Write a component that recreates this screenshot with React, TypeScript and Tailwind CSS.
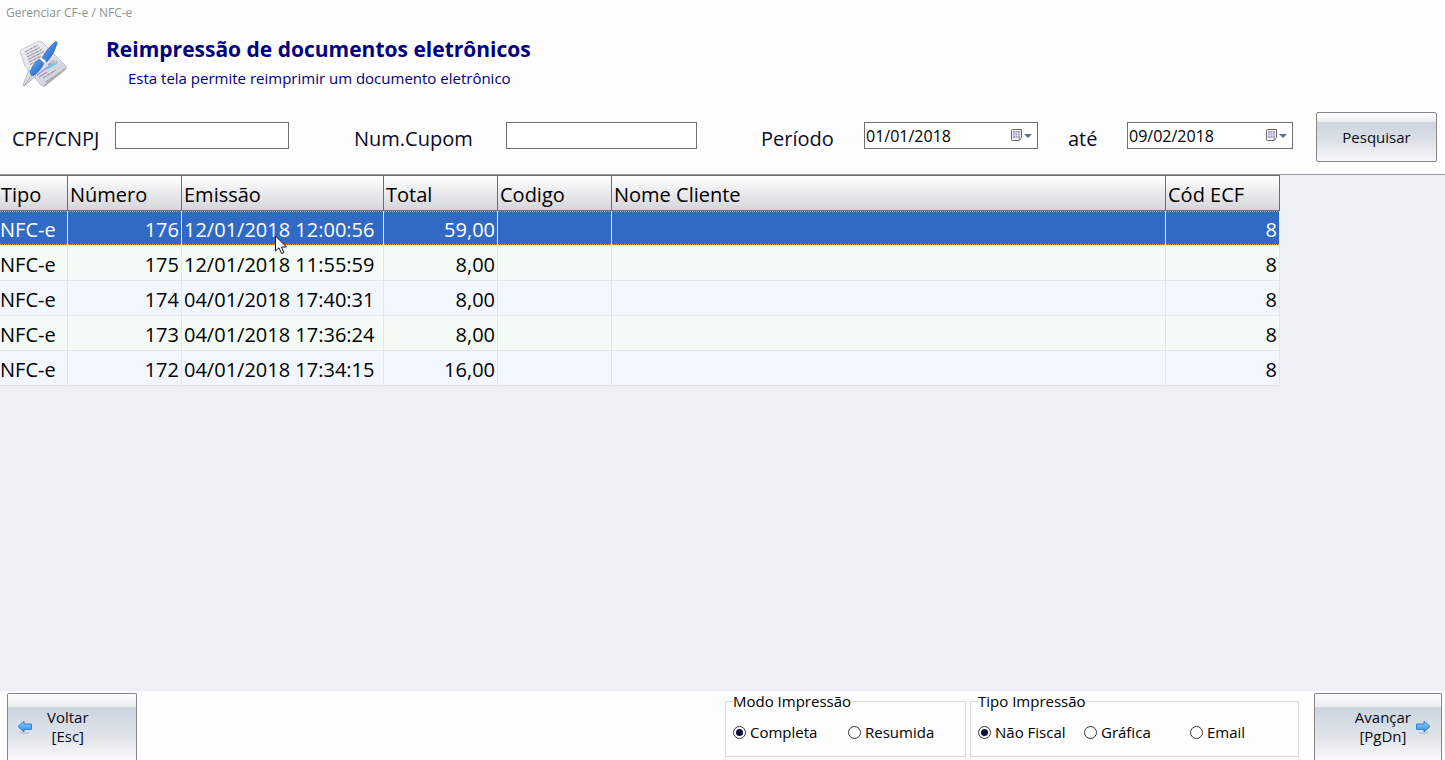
import type { ReactNode } from 'react';

const columns = [
  { label: 'Tipo', width: 'w-[68px]' },
  { label: 'Número', width: 'w-[114px]' },
  { label: 'Emissão', width: 'w-[202px]' },
  { label: 'Total', width: 'w-[114px]' },
  { label: 'Codigo', width: 'w-[114px]' },
  { label: 'Nome Cliente', width: '' },
  { label: 'Cód ECF', width: 'w-[114px]' },
];

const documents = [
  { type: 'NFC-e', number: 176, date: '12/01/2018 12:00:56', total: '59,00', ecf: 8 },
  { type: 'NFC-e', number: 175, date: '12/01/2018 11:55:59', total: '8,00', ecf: 8 },
  { type: 'NFC-e', number: 174, date: '04/01/2018 17:40:31', total: '8,00', ecf: 8 },
  { type: 'NFC-e', number: 173, date: '04/01/2018 17:36:24', total: '8,00', ecf: 8 },
  { type: 'NFC-e', number: 172, date: '04/01/2018 17:34:15', total: '16,00', ecf: 8 },
];

const DocumentIcon = () => (
  <svg viewBox="0 0 70 60" className="h-[60px] w-[70px]" aria-hidden="true">
    <defs>
      <linearGradient id="paper" x1="0" y1="0" x2="1" y2="1">
        <stop offset="0" stopColor="#f3f3f6" />
        <stop offset="0.5" stopColor="#dfdfe6" />
        <stop offset="1" stopColor="#c8c8d2" />
      </linearGradient>
      <linearGradient id="pen" x1="0" y1="0" x2="1" y2="1">
        <stop offset="0" stopColor="#7db4f0" />
        <stop offset="0.5" stopColor="#3f82dc" />
        <stop offset="1" stopColor="#2a60b8" />
      </linearGradient>
    </defs>
    <path d="M10 20Q10 18 13 17L29 9Q31 9 33 11L56 34Q57 37 55 38L35 54Q33 55 31 53L15 34Q13 27 10 20Z" fill="url(#paper)" stroke="#c4c4cc" strokeWidth="1" />
    <path d="M56 36L34 54" fill="none" stroke="#a9a9b6" strokeWidth="1.2" />
    <g stroke="#9c9ca8" strokeWidth="1.2" strokeDasharray="4 0.6">
      <path d="M15 20L28 13M16 22.5L30 15.5M17 25L32 17.5M18 27.5L34 19.5M19 30L31 24M20 32.5L28 28.5" />
      <path d="M38 33L44 28.5M33 46L46 38M36 50L50 41M42 33L47 29" />
    </g>
    <path d="M27 43L42 32M29 45L37 40" stroke="#9c8ed6" strokeWidth="1.4" />
    <path d="M37 37L47 31" stroke="#63d1f2" strokeWidth="1.5" />
    <path d="M19 38L26 44L14 54L13 53Z" fill="#e0e0e7" stroke="#a9a9b4" strokeWidth="0.8" />
    <path d="M14 54L22 43" stroke="#8d8d99" strokeWidth="0.8" />
    <path d="M20 40Q22 33 29 27L34 31Q30 40 23 44Q20 43 20 40Z" fill="url(#pen)" stroke="#2f66ba" strokeWidth="0.6" />
    <path d="M32 26Q37 16 45 10Q48 9 47 12Q44 22 37 30Z" fill="url(#pen)" stroke="#2f66ba" strokeWidth="0.6" />
    <path d="M30 27L32 26L36 29L34 31Z" fill="#f5f5fa" />
  </svg>
);

const CalendarIcon = () => (
  <svg viewBox="0 0 12 13" className="h-[13px] w-3" aria-hidden="true">
    <path d="M1.5 0.5H10.5V8.5L8 11.5H1.5Q0.5 11.5 0.5 10.5V1.5Q0.5 0.5 1.5 0.5Z" fill="#f4f2f2" stroke="#6c6464" />
    <path d="M2 2H9V9H2Z" fill="#a9a6c4" />
    <path d="M4.5 2V9M6.5 2V9M2 4.5H9M2 6.5H9" stroke="#efeef6" strokeWidth="0.5" />
    <path d="M7.5 12V9.5H10.5Z" fill="#8a8080" />
  </svg>
);

const ArrowIcon = ({ className = '' }: { className?: string }) => (
  <svg viewBox="0 0 16 14" className={`h-[14px] w-4 ${className}`} aria-hidden="true">
    <defs>
      <linearGradient id="arrow" x1="0" y1="0" x2="0" y2="1">
        <stop offset="0" stopColor="#8fd0fb" />
        <stop offset="1" stopColor="#2b90ec" />
      </linearGradient>
    </defs>
    <path d="M3 13H12" stroke="#a9afc8" strokeWidth="1.4" opacity="0.7" />
    <path d="M1 6.5L7 1V4H14.5V9.5H7V12Z" fill="url(#arrow)" stroke="#2c78c8" strokeWidth="0.9" strokeLinejoin="round" />
  </svg>
);

const MouseCursor = () => (
  <svg viewBox="0 0 13 20" className="pointer-events-none absolute top-6 left-[93px] z-10 h-5 w-[13px]" aria-hidden="true">
    <path d="M0.5 1V16L4 12.8L6.6 18.6L9 17.5L6.5 12H11.5Z" fill="#fff" stroke="#14143c" strokeWidth="1" />
  </svg>
);

const DateField = ({ id, label, value, className }: { id: string; label: string; value: string; className: string }) => (
  <div className={`mb-[3px] flex h-[27px] shrink-0 items-center border border-[#707070] bg-white pr-[5px] ${className}`}>
    <input
      id={id}
      type="text"
      defaultValue={value}
      aria-label={label}
      className="h-full w-full min-w-0 pl-px text-base text-black outline-none"
    />
    <button type="button" aria-label={`Abrir calendário ${label}`} className="flex items-center gap-px">
      <CalendarIcon />
      <svg viewBox="0 0 8 4" className="h-1 w-2" aria-hidden="true">
        <path d="M0 0H8L4 4Z" fill="#5b6b94" />
      </svg>
    </button>
  </div>
);

const RadioOption = ({
  name,
  label,
  checked = false,
  className = '',
}: {
  name: string;
  label: string;
  checked?: boolean;
  className?: string;
}) => (
  <label className={`flex items-center gap-1 whitespace-nowrap ${className}`}>
    <input
      type="radio"
      name={name}
      defaultChecked={checked}
      className="grid size-[13px] shrink-0 appearance-none place-items-center rounded-full border border-[#333] bg-white before:size-[7px] before:rounded-full checked:before:bg-[#0c0c3c]"
    />
    {label}
  </label>
);

const GlossyButton = ({ className = '', children }: { className?: string; children: ReactNode }) => (
  <button
    type="button"
    className={`shrink-0 border border-[#868689] bg-[linear-gradient(180deg,#fdfdfe_0%,#e9edf0_19%,#cbd5df_20%,#dde2e8_60%,#f7f8fa_100%)] text-[15px] leading-[19px] text-[#0a0a14] ${className}`}
  >
    {children}
  </button>
);

export default function App() {
  return (
    <div className="flex min-h-screen flex-col bg-[#eff0f5] font-['Open_Sans','Noto_Sans',sans-serif] text-black">
      <header className="border-b border-[#9a9a9e] bg-[#fdfdfe] pb-3">
        <p className="h-8 pt-1 pl-[6px] text-xs leading-[18px] text-[#8a958f]">Gerenciar CF-e / NFC-e</p>
        <div className="flex h-20 pl-[10px]">
          <DocumentIcon />
          <div className="pl-[26px] text-[#000080]">
            <h1 className="pt-1 text-[21px] leading-[26px] font-bold">Reimpressão de documentos eletrônicos</h1>
            <p className="pt-1 pl-[22px] text-[15px] leading-6">Esta tela permite reimprimir um documento eletrônico</p>
          </div>
        </div>

        {/* Filtros */}
        <form className="flex items-center pr-2 pl-3 text-xl leading-[26px] whitespace-nowrap text-[#0a0a28]">
          <label htmlFor="cpf" className="w-[103px] shrink-0 pt-1">CPF/CNPJ</label>
          <input id="cpf" type="text" className="mb-[3px] h-[27px] w-[174px] shrink-0 border border-[#707070] bg-white px-1 text-base" />
          <label htmlFor="cupom" className="ml-[65px] w-[152px] shrink-0 pt-1">Num.Cupom</label>
          <input id="cupom" type="text" className="mb-[3px] h-[27px] w-[191px] shrink-0 border border-[#707070] bg-white px-1 text-base" />
          <label htmlFor="from" className="ml-16 w-[103px] shrink-0 pt-1">Período</label>
          <DateField id="from" label="Período inicial" value="01/01/2018" className="w-[174px]" />
          <label htmlFor="until" className="ml-[30px] w-[59px] shrink-0 pt-1">até</label>
          <DateField id="until" label="Período final" value="09/02/2018" className="w-[166px]" />
          <GlossyButton className="ml-auto h-[50px] w-[121px] rounded-xs">Pesquisar</GlossyButton>
        </form>
      </header>

      {/* Documentos */}
      <main className="flex-1 pr-[165px]">
        <table className="w-full table-fixed border-separate border-spacing-0 text-xl leading-[26px] whitespace-nowrap">
          <thead>
            <tr>
              {columns.map((column) => (
                <th
                  key={column.label}
                  className={`h-9 border-y border-r border-[#6c6c70] bg-linear-to-b from-white to-[#d5d6da] p-0 pt-[3px] pl-0.5 text-left font-normal first:pl-px ${column.width}`}
                >
                  {column.label}
                </th>
              ))}
            </tr>
          </thead>
          <tbody>
            {documents.map((doc, index) => {
              const selected = index === 0;
              // dotted focus line along the top and bottom of the selected row
              const row = selected
                ? 'bg-[#316ac5] text-white [&>td]:border-[#e3e5e8] [&>td]:[background:repeating-linear-gradient(90deg,#f0a030_0_1px,#316ac5_1px_2px)_bottom/100%_1px_no-repeat,repeating-linear-gradient(90deg,#f0a030_0_1px,#316ac5_1px_2px)_top/100%_1px_no-repeat]'
                : index % 2 === 1
                  ? 'bg-[#f4fbf5] [&>td]:border-[#e3e5e8]'
                  : 'bg-[#f2f7ff] [&>td]:border-[#e3e5e8]';
              return (
                <tr key={doc.number} className={`[&>td]:h-[35px] [&>td]:border-r [&>td]:border-b [&>td]:p-0 [&>td]:pt-[3px] ${row}`}>
                  <td>{doc.type}</td>
                  <td className="pr-0.5! text-right">{doc.number}</td>
                  <td className="relative pl-0.5!">
                    {doc.date}
                    {selected && <MouseCursor />}
                  </td>
                  <td className="pr-0.5! text-right">{doc.total}</td>
                  <td />
                  <td />
                  <td className="pr-0.5! text-right">{doc.ecf}</td>
                </tr>
              );
            })}
          </tbody>
        </table>
      </main>

      <footer className="flex bg-[#fdfdfe] pt-0.5 pr-[3px] pl-[7px] text-[15px] leading-5">
        <GlossyButton className="flex h-[67px] w-[130px] items-center gap-[14px] rounded-t-xs border-b-0 pl-[9px]">
          <ArrowIcon />
          <span>
            <span className="block">Voltar</span>
            <span className="block">[Esc]</span>
          </span>
        </GlossyButton>
        <fieldset className="ml-auto h-16 w-[241px] border border-[#d9d9dc] pl-[7px]">
          <legend className="h-[17px] leading-4">Modo Impressão</legend>
          <div className="flex pt-3">
            <RadioOption name="mode" label="Completa" checked className="w-[115px]" />
            <RadioOption name="mode" label="Resumida" />
          </div>
        </fieldset>
        <fieldset className="mr-[15px] ml-1 h-16 w-[329px] border border-[#d9d9dc] pl-[7px]">
          <legend className="h-[17px] leading-4">Tipo Impressão</legend>
          <div className="flex pt-3">
            <RadioOption name="kind" label="Não Fiscal" checked className="w-[106px]" />
            <RadioOption name="kind" label="Gráfica" className="w-[106px]" />
            <RadioOption name="kind" label="Email" />
          </div>
        </fieldset>
        <GlossyButton className="flex h-[67px] w-[128px] items-center justify-end gap-1 rounded-t-xs border-b-0 pr-[10px]">
          <span>
            <span className="block">Avançar</span>
            <span className="block">[PgDn]</span>
          </span>
          <ArrowIcon className="-scale-x-100" />
        </GlossyButton>
      </footer>
    </div>
  );
}
